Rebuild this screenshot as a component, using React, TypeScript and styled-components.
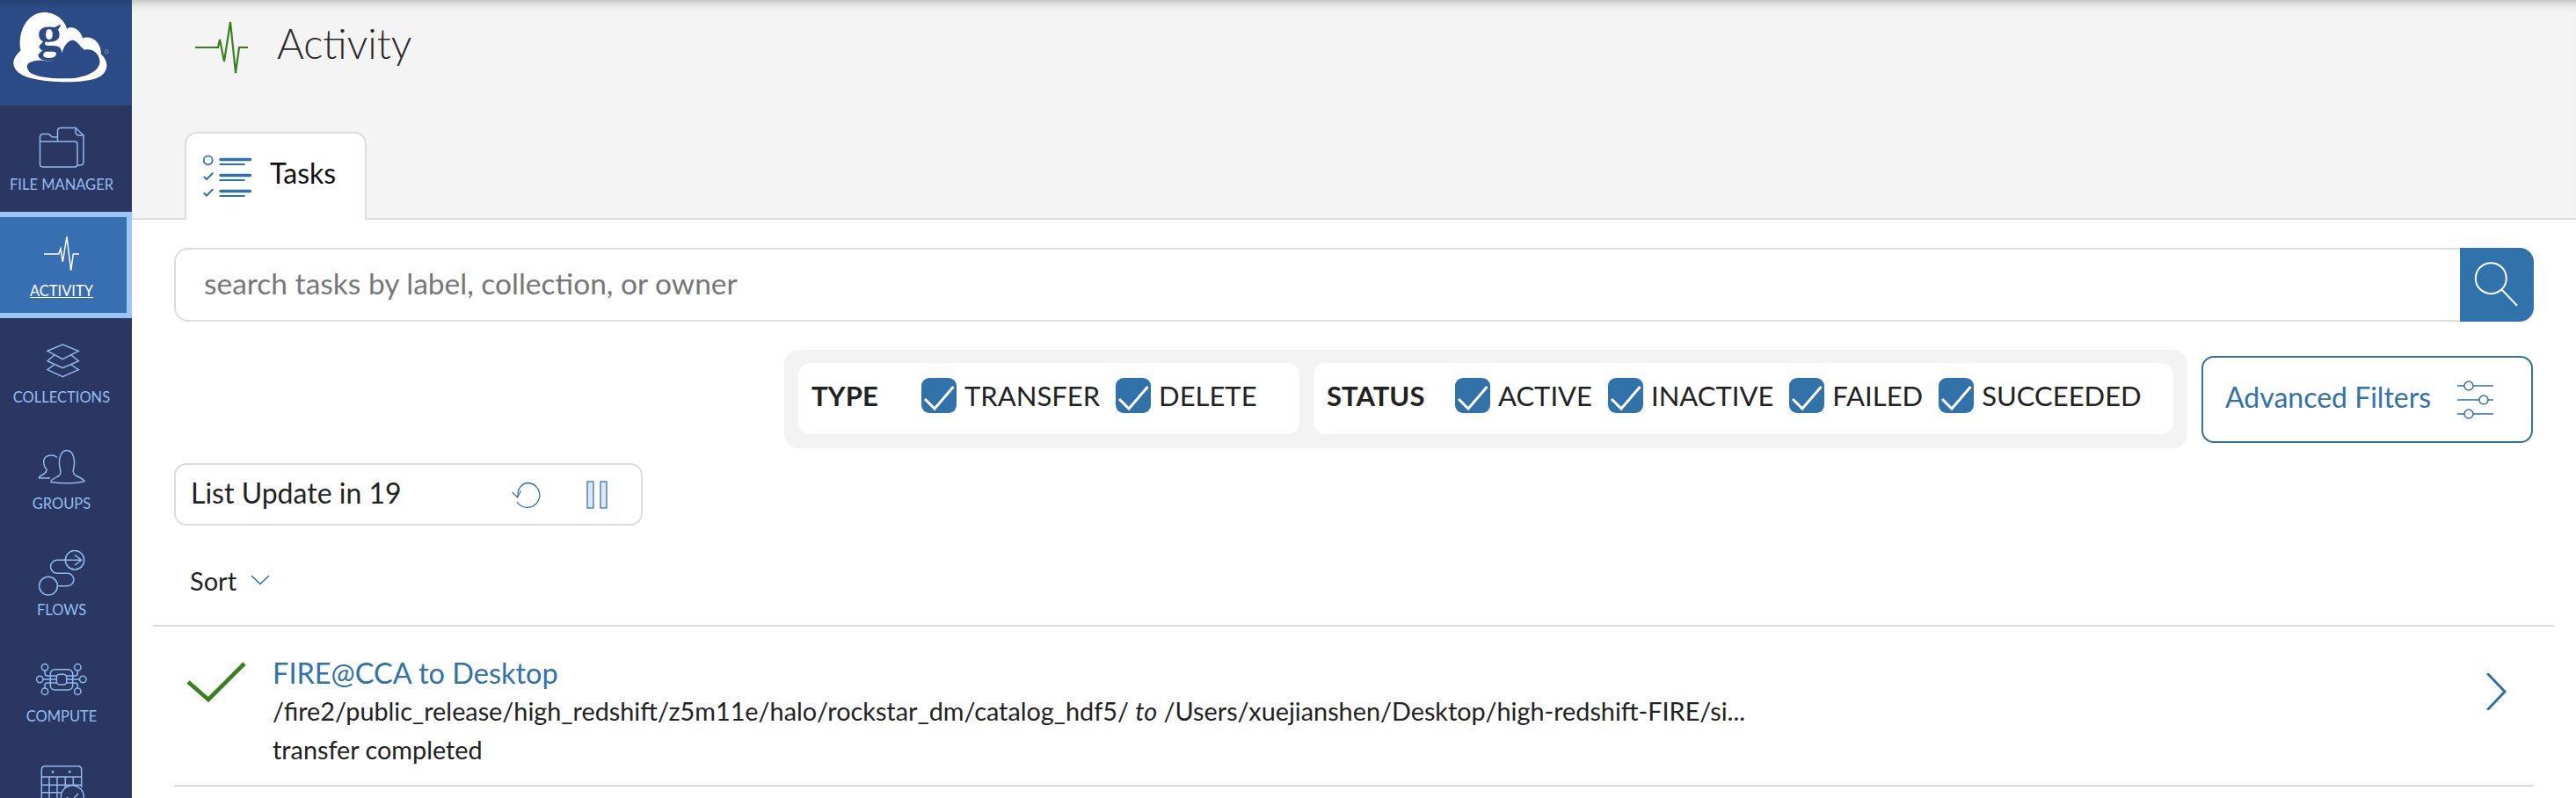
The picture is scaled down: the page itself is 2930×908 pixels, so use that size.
import React from 'react';
import styled, { createGlobalStyle } from 'styled-components';

const navItems = [
    { label: 'FILE MANAGER', icon: 'files' },
    { label: 'ACTIVITY', icon: 'activity', active: true },
    { label: 'COLLECTIONS', icon: 'collections' },
    { label: 'GROUPS', icon: 'groups' },
    { label: 'FLOWS', icon: 'flows' },
    { label: 'COMPUTE', icon: 'compute' },
    { icon: 'timers' },
]

const NavIcon = ({ name }: { name: string }) => {
    switch (name) {
        case 'files':
            return (
                <IconSvg viewBox="0 0 80 58">
                    <path d="M15.5 21 V16 Q15.5 12.5 19 12.5 H24 Q27 12.5 28 15 Q29 16 31 16 H35.5" />
                    <path d="M15.5 21 H55 Q58 21 58 24 V47 Q58 50 55 50 H19 Q15.5 50 15.5 47 Z" />
                    <path d="M35.5 21 V9 Q35.5 5.5 39 5.5 H56 L65 14 V44 Q65 48 61 48 H58" />
                    <path d="M56 5.5 V10 Q56 14 60 14 H65" />
                </IconSvg>
            )
        case 'activity':
            return (
                <IconSvg viewBox="0 0 80 58" $light>
                    <path d="M20 28 H36.7 L39 22 L41.3 37 L46 8 L50.7 47 L53.3 28 H60" />
                </IconSvg>
            )
        case 'collections':
            return (
                <IconSvg viewBox="0 0 80 58">
                    <path d="M24 17.3 L41.3 10 L59.3 17.3 L41.3 26.7 Z" />
                    <path d="M31.7 22 L24 28.7 L41.3 36.7 L59.3 28.7 L51 22" />
                    <path d="M31.7 33 L24 38.7 L41.3 46.7 L59.3 38.7 L51 33" />
                </IconSvg>
            )
        case 'groups':
            return (
                <IconSvg viewBox="0 0 80 58">
                    <path d="M38.5 31 C36 22 38 9.5 46 9.5 C54 9.5 56 22 53.5 31 C52.5 35 54 37 57 38.5 C61 40.5 66 42.5 66 44.5 C60 47 40 47.5 28 45.5 C27 43 33 40.5 36 39 C39 37.5 39.5 35 38.5 31 Z" />
                    <path d="M35 17.5 C31 14 22 14 20 20 C19 25 21 29 23 31 C23.5 34 21 36 17 38 C15 39 14 40.5 14.5 41 H27" />
                </IconSvg>
            )
        case 'flows':
            return (
                <IconSvg viewBox="0 0 80 58">
                    <circle cx="55" cy="13.3" r="10.7" />
                    <circle cx="25" cy="42.7" r="10.4" />
                    <path d="M44 13.3 H35 A7.5 7.5 0 0 0 35 28.3 H46.7 A7.2 7.2 0 0 1 46.7 42.7 H35.5" />
                    <path d="M44 13.3 H62.7 M55 7.5 L62.7 13.3 L55 19" />
                </IconSvg>
            )
        case 'compute':
            return (
                <IconSvg viewBox="0 0 80 58">
                    <rect x="27.3" y="16.7" width="25.4" height="23.3" rx="5" />
                    <rect x="34.3" y="22.3" width="11.4" height="11.7" rx="3.5" />
                    <circle cx="21" cy="14.3" r="3.7" />
                    <circle cx="58.3" cy="14.3" r="3.7" />
                    <circle cx="15.3" cy="28" r="3.7" />
                    <circle cx="64.3" cy="28" r="3.7" />
                    <circle cx="21" cy="41.7" r="3.7" />
                    <circle cx="58.3" cy="41.7" r="3.7" />
                    <path d="M19 28 H34.3 M46 28 H60.6" />
                    <path d="M21 18 V21 Q21 24 24 24 H34.3 M58.3 18 V21 Q58.3 24 55 24 H45.7" />
                    <path d="M21 38 V35 Q21 32 24 32 H34.3 M58.3 38 V35 Q58.3 32 55 32 H45.7" />
                </IconSvg>
            )
        default:
            return (
                <IconSvg viewBox="0 0 80 58">
                    <path d="M17.3 58 V10 Q17.3 5.7 21.5 5.7 H58.5 Q62.7 5.7 62.7 10 V30" />
                    <path d="M17.3 18 H62.7 M17.3 27.3 H62.7 M17.3 35.7 H40 M17.3 46 H38" />
                    <path d="M26 18 V58 M35 18 V58 M44.3 18 V30 M53.3 18 V28" />
                    <circle cx="30" cy="12.3" r="0.7" />
                    <circle cx="49.3" cy="12.3" r="0.7" />
                    <circle cx="52.3" cy="40.7" r="13" fill="#2a3763" />
                    <path d="M46 41 L51 46 L59 37" />
                </IconSvg>
            )
    }
}

const App: React.FC = () => {
    return (
        <Page>
            <GlobalStyle />
            <Sidebar>
                <LogoBlock>
                    <LogoSvg viewBox="0 0 450 360">
                        <path
                            fill="#fff"
                            fillRule="evenodd"
                            d="M70 170 C60 110 90 45 150 42 C190 42 222 70 228 98 C250 85 275 105 282 130 C310 120 345 140 345 185 C368 205 375 240 340 262 C300 285 180 285 110 268 C60 258 30 225 55 190 C60 182 68 175 72 170 Z M92 225 C95 210 125 205 150 207 C175 212 205 200 215 170 C225 145 240 135 252 138 C270 145 275 165 290 170 C315 165 335 180 340 205 C345 235 310 258 260 266 C200 272 120 265 100 245 C95 238 92 232 92 225 Z"
                        />
                        <LogoLetter x="126" y="172">g</LogoLetter>
                        <LogoMark cx="364" cy="176" r="6" />
                    </LogoSvg>
                </LogoBlock>
                {navItems.map((item) => (
                    <NavItem key={item.icon} $active={item.active}>
                        <NavIcon name={item.icon} />
                        {item.label && <NavLabel $active={item.active}>{item.label}</NavLabel>}
                    </NavItem>
                ))}
            </Sidebar>
            <Content>
                <Header>
                    <TitleRow>
                        <svg width="60" height="60" viewBox="0 0 60 60" fill="none" stroke="#3a8020" strokeWidth="2.2">
                            <path d="M0 30 H26 L28 21 L33 46 L40 1 L46 59 L50 30 H60" />
                        </svg>
                        <Title>Activity</Title>
                    </TitleRow>
                    <TabBar>
                        <Tab>
                            <svg width="56" height="50" viewBox="0 0 56 50" fill="none" stroke="#3272ab">
                                <circle cx="5.7" cy="6.3" r="5" strokeWidth="1.8" />
                                <path strokeWidth="3.5" strokeLinecap="round" d="M20 5.5 H53.5 M20 23.5 H53.5 M20 41.5 H53.5" />
                                <path strokeWidth="2" d="M18.5 11 H47.5 M18.5 29 H47.5 M18.5 47 H47.5" />
                                <path strokeWidth="2" d="M0.7 25 L4 28 L11.3 20.7 M0.7 43.5 L4 46.5 L11.3 39.2" />
                            </svg>
                            <TabLabel>Tasks</TabLabel>
                        </Tab>
                    </TabBar>
                </Header>
                <Main>
                    <SearchBar>
                        <SearchInput>search tasks by label, collection, or owner</SearchInput>
                        <SearchButton>
                            <svg width="84" height="84" viewBox="0 0 84 84" fill="none" stroke="#fff" strokeWidth="2">
                                <circle cx="35.3" cy="34.7" r="17.5" />
                                <path d="M48 48 L65 65.7" />
                            </svg>
                        </SearchButton>
                    </SearchBar>
                    <FilterRow>
                        <FilterGroup>
                            <FilterCard $width={570}>
                                <FilterName $width={125}>TYPE</FilterName>
                                <CheckOption $gap={18} label="TRANSFER" />
                                <CheckOption label="DELETE" />
                            </FilterCard>
                            <FilterCard $width={978}>
                                <FilterName $width={146}>STATUS</FilterName>
                                <CheckOption $gap={18} label="ACTIVE" />
                                <CheckOption $gap={18} label="INACTIVE" />
                                <CheckOption $gap={18} label="FAILED" />
                                <CheckOption label="SUCCEEDED" />
                            </FilterCard>
                        </FilterGroup>
                        <AdvancedButton>
                            Advanced Filters
                            <SliderIcon width="41" height="44" viewBox="0 0 41 44">
                                <path d="M0 6 H8 M18 6 H41 M0 22 H25 M35 22 H41 M0 38 H8 M18 38 H41" />
                                <circle cx="13" cy="6" r="5" />
                                <circle cx="30" cy="22" r="5" />
                                <circle cx="13" cy="38" r="5" />
                            </SliderIcon>
                        </AdvancedButton>
                    </FilterRow>
                    <UpdateBox>
                        <UpdateText>List Update in 19</UpdateText>
                        <svg width="36" height="32" viewBox="0 0 36 32" fill="none" stroke="#3272ab" strokeWidth="1.3">
                            <path d="M8 18.5 C7 10 12 2.5 20 2.5 A14 14 0 1 1 7 24" />
                            <path d="M1.5 13 L7.5 19 L11.5 11.5" />
                        </svg>
                        <PauseIcon width="24" height="32" viewBox="0 0 24 32">
                            <rect x="1" y="1" width="7" height="30" />
                            <rect x="16" y="1" width="7" height="30" />
                        </PauseIcon>
                    </UpdateBox>
                    <SortRow>
                        Sort
                        <svg width="22" height="12" viewBox="0 0 22 12" fill="none" stroke="#3272ab" strokeWidth="1.6">
                            <path d="M1 1 L11 10.5 L21 1" />
                        </svg>
                    </SortRow>
                    <ListDivider />
                    <TaskRow>
                        <StatusCheck width="68" height="46" viewBox="0 0 68 46" fill="none" stroke="#3a8020" strokeWidth="4.6">
                            <path d="M2 23 L25 43 L66 2" />
                        </StatusCheck>
                        <TaskText>
                            <TaskTitle>FIRE@CCA to Desktop</TaskTitle>
                            <TaskLine>
                                /fire2/public_release/high_redshift/z5m11e/halo/rockstar_dm/catalog_hdf5/ <em>to</em> /Users/xuejianshen/Desktop/high-redshift-FIRE/si...
                            </TaskLine>
                            <TaskLine>transfer completed</TaskLine>
                        </TaskText>
                        <TaskChevron width="24" height="42" viewBox="0 0 24 42" fill="none" stroke="#3272ab" strokeWidth="3" strokeLinecap="round">
                            <path d="M2 1 L21 21 L2 41" />
                        </TaskChevron>
                    </TaskRow>
                </Main>
            </Content>
        </Page>
    )
}
export default App

const CheckOption = ({ label, $gap = 0 }: { label: string; $gap?: number }) => (
    <Option $gap={$gap}>
        <CheckBox>
            <svg width="40" height="40" viewBox="0 0 40 40" fill="none" stroke="#fff" strokeWidth="3">
                <path d="M4 24 L15 35 L36.5 10" />
            </svg>
        </CheckBox>
        {label}
    </Option>
)

const GlobalStyle = createGlobalStyle`
    html, body {
        margin: 0;
        padding: 0;
        height: 100%;
        overflow: hidden;
        background: #fff;
    }
    body {
        font-family: 'Lato', 'Liberation Sans', sans-serif;
        color: #222;
    }
`
const Page = styled.div`
    display: flex;
    width: 2930px;
    height: 908px;
    overflow: hidden;
`
const Sidebar = styled.nav`
    flex: 0 0 150px;
    display: flex;
    flex-direction: column;
    background: #2a3763;
`
const LogoBlock = styled.div`
    flex: 0 0 120px;
    background: #2c4a85;
    box-shadow: inset 0 10px 10px -8px rgba(0, 0, 0, 0.2);
`
const LogoSvg = styled.svg`
    display: block;
    width: 150px;
    height: 120px;
`
const LogoLetter = styled.text`
    font-family: 'Liberation Serif', serif;
    font-weight: 700;
    font-size: 172px;
    fill: #2c4a85;
`
const LogoMark = styled.circle`
    fill: none;
    stroke: #9db4d8;
    stroke-width: 2;
`
const NavItem = styled.a<{ $active?: boolean }>`
    flex: 0 0 121px;
    box-sizing: border-box;
    padding: 20px 10px 0 0;
    display: flex;
    flex-direction: column;
    align-items: center;
    background: ${(p) => (p.$active ? '#386fb3' : 'transparent')};
    box-shadow: ${(p) => (p.$active ? 'inset -6px -6px 0 #9cc4f4, inset 0 6px 0 #9cc4f4' : 'none')};
`
const IconSvg = styled.svg<{ $light?: boolean }>`
    width: 80px;
    height: 58px;
    fill: none;
    stroke: ${(p) => (p.$light ? '#fff' : '#8fb9ec')};
    stroke-width: 1.5;
    flex: none;
`
const NavLabel = styled.span<{ $active?: boolean }>`
    font-size: 16.5px;
    line-height: 24px;
    white-space: nowrap;
    color: ${(p) => (p.$active ? '#fff' : '#94bdee')};
    text-decoration: ${(p) => (p.$active ? 'underline' : 'none')};
`
const Content = styled.div`
    flex: 1 1 auto;
    min-width: 0;
    display: flex;
    flex-direction: column;
`
const Header = styled.header`
    flex: 0 0 250px;
    min-height: 0;
    box-sizing: border-box;
    display: flex;
    flex-direction: column;
    background: #f4f4f4;
    border-bottom: 2px solid #ddd;
    box-shadow: inset 0 12px 12px -10px rgba(0, 0, 0, 0.28);
`
const TitleRow = styled.div`
    flex: 0 0 150px;
    box-sizing: border-box;
    padding: 24px 0 0 72px;
    display: flex;
    align-items: flex-start;
    gap: 33px;
`
const Title = styled.h1`
    margin: 0;
    font-size: 47px;
    font-weight: 300;
    line-height: 50px;
    color: #2a2a2a;
`
const TabBar = styled.div`
    flex: none;
    display: flex;
    padding-left: 60px;
`
const Tab = styled.div`
    width: 207px;
    height: 100px;
    box-sizing: border-box;
    padding: 24px 0 0 19px;
    display: flex;
    align-items: flex-start;
    gap: 20px;
    background: #fff;
    border: 2px solid #ddd;
    border-bottom: none;
    border-radius: 14px 14px 0 0;
`
const TabLabel = styled.span`
    font-size: 32px;
    line-height: 42px;
    color: #111;
`
const Main = styled.main`
    flex: 1 1 auto;
    padding: 32px 48px 0;
`
const SearchBar = styled.div`
    display: flex;
    height: 84px;
`
const SearchInput = styled.div`
    flex: 1 1 auto;
    box-sizing: border-box;
    padding: 0 0 5px 32px;
    display: flex;
    align-items: center;
    font-size: 33.5px;
    color: #777;
    border: 2px solid #ddd;
    border-right: none;
    border-radius: 16px 0 0 16px;
`
const SearchButton = styled.button`
    flex: 0 0 84px;
    padding: 0;
    border: none;
    background: #3272ab;
    border-radius: 0 16px 16px 0;
    display: flex;
`
const FilterRow = styled.div`
    margin-top: 32px;
    display: flex;
    justify-content: flex-end;
    align-items: center;
    gap: 16px;
    padding-right: 1px;
`
const FilterGroup = styled.div`
    box-sizing: border-box;
    height: 112px;
    padding: 15px 16px 16px;
    display: flex;
    gap: 16px;
    background: #f3f3f3;
    border-radius: 16px;
`
const FilterCard = styled.div<{ $width: number }>`
    width: ${(p) => p.$width}px;
    box-sizing: border-box;
    padding: 0 0 7px 15px;
    display: flex;
    align-items: center;
    background: #fff;
    border-radius: 14px;
`
const FilterName = styled.span<{ $width: number }>`
    flex: 0 0 ${(p) => p.$width}px;
    font-size: 31px;
    font-weight: 700;
    color: #222;
`
const Option = styled.label<{ $gap: number }>`
    display: flex;
    align-items: center;
    gap: 9px;
    margin-right: ${(p) => p.$gap}px;
    font-size: 31px;
    color: #222;
`
const CheckBox = styled.span`
    width: 40px;
    height: 40px;
    flex: none;
    display: flex;
    background: #3272ab;
    border-radius: 9px;
`
const AdvancedButton = styled.button`
    width: 377px;
    height: 99px;
    box-sizing: border-box;
    padding: 0 43px 6px 25px;
    display: flex;
    align-items: center;
    justify-content: space-between;
    font-family: inherit;
    font-size: 32px;
    color: #3272ab;
    background: #fff;
    border: 2px solid #3272ab;
    border-radius: 14px;
`
const SliderIcon = styled.svg`
    margin-top: 7px;
    fill: none;
    stroke: #3272ab;
    stroke-width: 1.5;
`
const UpdateBox = styled.div`
    margin-top: 17px;
    width: 533px;
    height: 71px;
    box-sizing: border-box;
    padding-left: 17px;
    display: flex;
    align-items: center;
    border: 2px solid #ddd;
    border-radius: 14px;
`
const UpdateText = styled.span`
    flex: 0 0 364px;
    margin-bottom: 5px;
    font-size: 32px;
    color: #222;
`
const PauseIcon = styled.svg`
    margin-left: 50px;
    fill: #dbe7f2;
    stroke: #4f86b8;
    stroke-width: 1.5;
`
const SortRow = styled.div`
    margin-top: 40px;
    height: 44px;
    padding-left: 18px;
    display: flex;
    align-items: center;
    gap: 16px;
    font-size: 29px;
    color: #222;
`
const ListDivider = styled.hr`
    margin: 29px -23px 0 -24px;
    height: 2px;
    border: none;
    background: #ddd;
`
const TaskRow = styled.div`
    height: 182px;
    box-sizing: border-box;
    padding: 31px 30px 0 14px;
    display: flex;
    align-items: flex-start;
    gap: 30px;
    border-bottom: 2px solid #ddd;
`
const StatusCheck = styled.svg`
    margin-top: 9px;
    flex: none;
`
const TaskText = styled.div`
    flex: 1 1 auto;
    min-width: 0;
`
const TaskTitle = styled.div`
    font-size: 32.5px;
    line-height: 43px;
    color: #3272ab;
`
const TaskLine = styled.div`
    font-size: 28.8px;
    line-height: 44px;
    color: #222;
    white-space: nowrap;
`
const TaskChevron = styled.svg`
    margin-top: 22px;
    flex: none;
`
